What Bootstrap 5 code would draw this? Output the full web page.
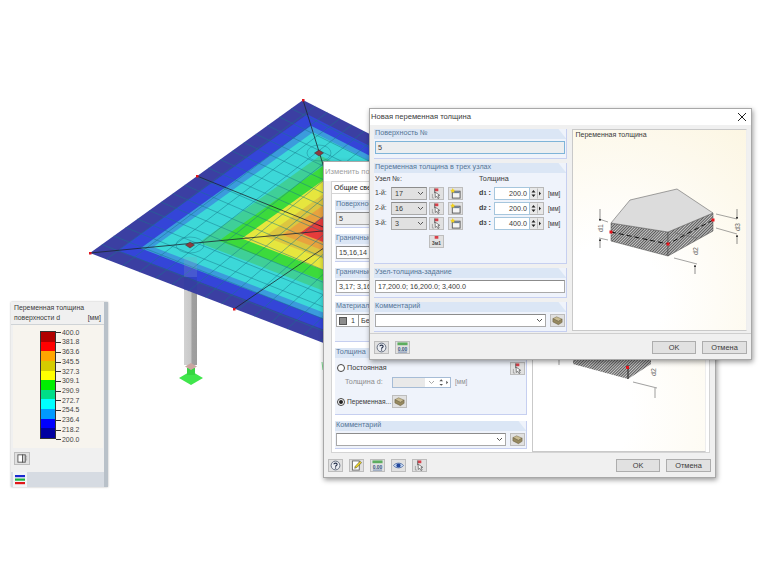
<!DOCTYPE html>
<html lang="ru">
<head>
<meta charset="utf-8">
<title>Новая переменная толщина</title>
<link href="https://cdn.jsdelivr.net/npm/bootstrap@5.3.0/dist/css/bootstrap.min.css" rel="stylesheet">
<style>
html,body{margin:0;background:#fff;overflow:hidden}
.desk{position:relative;width:760px;height:570px;font-family:"Liberation Sans",Arial,sans-serif;font-size:7.2px;line-height:1.2;color:#3a3a3a}
.scene{position:absolute;left:0;top:0}
.win{position:absolute;background:#f0f0f0;border:1px solid #a8a8a8;box-shadow:1px 2px 5px rgba(0,0,0,.4)}
.win-front{left:369px;top:108px;width:383px;height:252px}
.win-back{left:323px;top:161px;width:393px;height:317px}
.win-legend{position:absolute;left:11px;top:302px;width:97px;height:185px;background:#f0f0f0;border-right:4px solid #b9c1c9;box-shadow:0 0 2px rgba(0,0,0,.3)}
.ttl{height:16px;background:#fff;padding-left:1px;font-size:7.6px}
.ttl-dim{color:#a0a0a0;height:19px}
.closex{width:12px;height:12px;margin-right:3px}
.main-f{height:208px;padding:4px 4px 0 4px;gap:5px}
.col-f{width:194px}
.col-b{width:193px}
.grp{background:#eff3fb;border-right:1px solid #c6cff0;border-bottom:1px solid #c6cff0}
.grp-h{height:10px;background:#dbe6f5;color:#557596;padding-left:1px;clip-path:polygon(0 0,calc(100% - 8px) 0,100% 100%,0 100%)}
.grp-b{padding:2px 1px 0 1px}
.h28{height:28px}.h30{height:30px}.h40{height:40px}.h67{height:67px}.h101{height:101px}
.fld{height:13px;background:#fff;border:1px solid #a9a9a9;border-top-color:#8c8c8c;padding:0 2px;line-height:11px;border-radius:0;color:#3a3a3a}
.fld-focus{background:#eceef0;border-color:#7fb4d8}
.fld-gray{background:#ececec}
.sel{width:36px;background:#e1e1e1;padding-left:3px}
.chev{width:7px;height:5px;margin-left:auto;flex:none}
.tb{width:15px;height:13px;padding:0;background:#e1e1e1;border:1px solid #bdbdbd;border-radius:0;flex:none;line-height:0}
.tb:hover{background:#e1e1e1}
.tb svg{width:11px;height:11px}
.ok{height:13px;padding:0;background:#e1e1e1;border:1px solid #adadad;border-radius:0;font-size:7.4px;line-height:11px;color:#3a3a3a}
.w44{width:44px}.w45{width:45px}
.row-s{height:13px;margin-bottom:2px}
.lab1{width:16px;font-size:6.8px}
.lab2{width:15px;font-weight:700}
.lab2 em{font-style:normal;font-size:5.6px}
.sp-l{margin-left:2px}.sp-m{margin-left:4px}.sp-r{margin-left:16px}
.num{width:36px;text-align:right;background:#fff;border-color:#a6c6dd}
.spin{width:14px;height:13px;background:#e8e8e8;border:1px solid #b8b8b8;border-left:0;flex:none}
.spin svg{display:block;width:12px;height:11px}
.unit{margin-left:4px;font-size:6.4px}
.hdr-l{width:104px;height:12px;padding-left:0}
.hdr-r{height:12px}
.pick3{margin:3px 0 0 54px}
.foot{border-top:1px solid #cfcfcf;padding:7px 4px 0 4px}
.gp6{gap:6px}
.prev{background:radial-gradient(circle at 20% 85%,#fff 25%,#fcf6e3 100%);border:1px solid #c9c9c9;border-right-color:#eee;position:relative;font-size:7px;padding:1px 2px}
.prev-f{width:175px;height:202px}
.prev-b{width:174px;height:252px}
.prev svg{position:absolute;left:0;top:0}
.prev text{font-family:"Liberation Sans",Arial,sans-serif;font-size:7px;fill:#666}
.tab-w{height:12px;width:68px;margin-left:7px;background:#fff;padding:2px 0 0 2px;border:1px solid #d4d4d4;border-bottom:0;color:#222}
.pane{margin:0 5px 0 7px;height:260px;background:#fff;border:1px solid #d4d4d4;padding:6px 3px 0 3px;gap:5px}
.foot-b{padding:6px 4px 0 4px}
.swatch{width:8px;height:8px;background:#8c8c8c;border:1px solid #555;margin-right:4px;flex:none}
.vbar{border-left:1px solid #999;margin:0 3px;padding-left:2px}
.rb{width:8px;height:8px;border-radius:50%;border:1px solid #444;background:#fff;margin-right:2px;flex:none;position:relative}
.rb-on::after{content:"";position:absolute;left:1px;top:1px;width:4px;height:4px;border-radius:50%;background:#222}
.t-row1{height:14px;margin-top:3px;padding-left:1px}
.t-row2{height:12px;margin-top:1px;color:#8d8d8d}
.t-ind{margin-left:9px;width:47px;flex:none}
.t-inp{width:59px;height:11px;background:#fff;border:1px solid #a6bcd6;flex:none;padding-right:1px}
.t-gray{width:32px;height:9px;background:#e9e9e9;flex:none}
.t-inp .chev{margin:0 3px 0 3px}
.t-row3{height:13px;margin-top:7px;padding-left:1px}
.t-lab{width:45px;flex:none;white-space:nowrap;font-size:6.6px}
.lg-h{padding:1px 3px 0 3px;height:23px;border-bottom:1px solid #cfd3d6;line-height:10px;font-size:6.9px}
.lg-b{background:#f7f4ee;height:123px;margin:0 0 0 2px;width:90px;position:relative;padding:6px 0 0 27px}
.lg-bar{width:16px;height:108px;border:1px solid #333;flex:none}
.lg-bar i{display:block;flex:1 1 0}
.lg-sc{height:117px;margin-top:-3px;font-size:6.9px}
.lg-sc span{display:flex;align-items:center;height:9.73px;color:#444}
.lg-sc span::before{content:"";width:5px;border-top:1px solid #333;margin-right:1px}
.lg-btnrow{height:23px;padding:4px 0 0 3px}
.lg-btn{width:16px;height:13px}
.lg-foot{height:15px;background:#d6dbe2;padding-left:2px}
.lg-tab{width:14px;height:15px;background:#f2f4f6;padding:2px}
.lg-tab svg{display:block;width:10px;height:11px}
</style>
</head>
<body>
<svg width="0" height="0" class="position-absolute">
<defs>
<symbol id="i-help" viewBox="0 0 12 12"><circle cx="6" cy="6" r="4.8" fill="#eef0f4" stroke="#5a6577" stroke-width="1"/><path d="M4.200 4.600C4.400 3 7.800 3 7.800 4.800 7.800 6 6 6 6 7.300" fill="none" stroke="#24304a" stroke-width="1.200"/><rect x="5.400" y="8.100" width="1.300" height="1.300" fill="#24304a"/></symbol>
<symbol id="i-pick" viewBox="0 0 12 12"><path d="M4 .5h4v3H4z" fill="#d8404a"/><path d="M4 .5v5" stroke="#666"/><path d="M4.500 4.500l5 3.500-2 .4 1.400 2.500-1.300.6-1.400-2.500-1.500 1.300z" fill="#fff" stroke="#444" stroke-width=".7"/><path d="M1.500 6.500v4.500h2" fill="none" stroke="#888" stroke-width=".7"/></symbol>
<symbol id="i-new" viewBox="0 0 12 12"><rect x="2.500" y="3.500" width="8.500" height="7.500" fill="#f4f4f4" stroke="#555"/><rect x="3" y="4" width="7.500" height="1.600" fill="#6a7f98"/><path d="M3 0l.9 1.800L6 2.200 4.300 3.400 4.800 5.400 3 4.300 1.200 5.400 1.700 3.400 0 2.200 2.100 1.800z" fill="#f2d21c"/></symbol>
<symbol id="i-book" viewBox="0 0 12 12"><path d="M1 4l4-2 6 2.500-4 2.500z" fill="#c9bc92" stroke="#7d7250" stroke-width=".6"/><path d="M1 4v3.500L7 10.500l4-2.500V4.500L7 7z" fill="#96895f" stroke="#6c6243" stroke-width=".6"/></symbol>
<symbol id="i-num" viewBox="0 0 12 12"><rect x="0.500" y="0.500" width="11" height="3" fill="#5cad5e"/><text x="6" y="9.500" text-anchor="middle" font-size="5.400" font-family="Liberation Sans,sans-serif" font-weight="700" fill="#34567e">0.00</text><path d="M1 11h10" stroke="#4a6a9a" stroke-width=".8"/></symbol>
<symbol id="i-edit" viewBox="0 0 12 12"><rect x="1.500" y="1" width="7.500" height="10" fill="#fff" stroke="#666"/><path d="M4 9l.6-2.200L10 1.400l1.500 1.500L6.200 8.400z" fill="#efd520" stroke="#444" stroke-width=".6"/></symbol>
<symbol id="i-eye" viewBox="0 0 12 12"><path d="M.5 6C3 2.600 9 2.600 11.500 6 9 9.400 3 9.400.5 6z" fill="#c6d8ee" stroke="#3a5a9c" stroke-width=".8"/><circle cx="6" cy="6" r="2.300" fill="#23479c"/></symbol>
<symbol id="i-tile" viewBox="0 0 12 12"><rect x="1" y="2" width="5" height="8" fill="#fff" stroke="#555"/><rect x="6" y="2" width="3" height="8" fill="#d6d6d6" stroke="#555"/><path d="M10.500 3v6" stroke="#888" stroke-dasharray="1 1"/></symbol>
<symbol id="i-3m1" viewBox="0 0 12 12"><path d="M4 0h4v3H4z" fill="#d8404a"/><text x="6" y="10" text-anchor="middle" font-size="5.200" font-family="Liberation Sans,sans-serif" font-weight="700" fill="#444">3м1</text></symbol>
<pattern id="hatch" width="2" height="2" patternUnits="userSpaceOnUse" patternTransform="rotate(45)"><rect width="2" height="2" fill="#c8c8c8"/><rect width="1" height="2" fill="#5a5a5a"/></pattern>
<marker id="ar" viewBox="0 0 6 6" refX="5" refY="3" markerWidth="4" markerHeight="4" orient="auto"><path d="M0 0l6 3-6 3z" fill="#333"/></marker>
</defs>
</svg>

<div class="desk">
  <svg id="scene" class="scene" width="760" height="570" viewBox="0 0 760 570">
    <defs><linearGradient id="col" x1="0" x2="1" y1="0" y2="0"><stop offset="0" stop-color="#d2d2d2"/><stop offset=".55" stop-color="#c8c8c8"/><stop offset=".6" stop-color="#a0a0a0"/><stop offset="1" stop-color="#9c9c9c"/></linearGradient></defs>
    <rect x="184" y="257" width="13" height="108" fill="url(#col)"/>
    <rect x="187" y="368" width="8" height="9" fill="#35d640"/>
    <path d="M191 371l12 7-12 7-12-7z" fill="#40e64c"/>
    <rect x="187" y="369" width="8" height="6" fill="#35d640"/>
    <path d="M191 363l6 3.500-6 3.500-6-3.500z" fill="#c9a6a0"/>
    <g id="plate"></g>
    <rect x="184" y="257" width="13" height="20" fill="#8fa4b8" opacity=".22"/>
    <rect x="184" y="277" width="13" height="13" fill="#2a3aa0" opacity=".3"/>
    <g stroke="#1c2630" stroke-width=".8" fill="none">
      <path d="M303 100L343 229"/><path d="M90 253L343 229"/><path d="M197 176L343 235"/><path d="M234 309L343 235"/>
    </g>
    <g fill="#e0161e"><rect x="302" y="99" width="2.500" height="2.500"/><rect x="89" y="252" width="2.500" height="2.500"/><rect x="196" y="175" width="2.500" height="2.500"/><rect x="233" y="308" width="2.500" height="2.500"/></g>
    <path d="M190 242l4.500 3-4.500 3-4.500-3z" fill="#8e3a3e" stroke="#333" stroke-width=".5"/>
    <path d="M319 150l4.500 3-4.500 3-4.500-3z" fill="#8e3a3e" stroke="#333" stroke-width=".5"/>
    <path d="M322 362l1 8" stroke="#5ad070" stroke-width=".8"/>
  </svg>

  <aside class="win-legend d-flex flex-column">
    <div class="lg-h d-flex flex-column">
      <div>Переменная толщина</div>
      <div class="d-flex justify-content-between"><span>поверхности d</span><span>[мм]</span></div>
    </div>
    <div class="lg-b d-flex">
      <div class="lg-bar d-flex flex-column">
        <i style="background:#b00000"></i><i style="background:#ff0000"></i><i style="background:#ffa500"></i><i style="background:#d4cc00"></i><i style="background:#ffff00"></i><i style="background:#00ee00"></i><i style="background:#00dd88"></i><i style="background:#00ffff"></i><i style="background:#0099ff"></i><i style="background:#0000ff"></i><i style="background:#0000a0"></i>
      </div>
      <div class="lg-sc d-flex flex-column">
        <span>400.0</span><span>381.8</span><span>363.6</span><span>345.5</span><span>327.3</span><span>309.1</span><span>290.9</span><span>272.7</span><span>254.5</span><span>236.4</span><span>218.2</span><span>200.0</span>
      </div>
    </div>
    <div class="lg-btnrow"><button class="btn tb lg-btn" type="button"><svg><use href="#i-tile"/></svg></button></div>
    <div class="lg-foot mt-auto"><div class="lg-tab"><svg viewBox="0 0 10 11"><rect y="1" width="10" height="2.200" fill="#1a2ad0"/><rect y="4.500" width="10" height="2.200" fill="#18b040"/><rect y="8" width="10" height="2.200" fill="#e01818"/></svg></div></div>
  </aside>

  <section class="win win-back d-flex flex-column">
    <div class="ttl ttl-dim d-flex align-items-center">Изменить по</div>
    <div class="tab-w">Общие свед</div>
    <div class="pane d-flex">
      <div class="col-b d-flex flex-column gp6">
        <div class="grp h28"><div class="grp-h">Поверхнос</div><div class="grp-b"><div class="fld fld-gray">5</div></div></div>
        <div class="grp h28"><div class="grp-h">Граничные</div><div class="grp-b"><div class="fld">15,16,14</div></div></div>
        <div class="grp h28"><div class="grp-h">Граничные</div><div class="grp-b"><div class="fld">3,17; 3,16;</div></div></div>
        <div class="grp h40"><div class="grp-h">Материал</div><div class="grp-b"><div class="fld d-flex align-items-center"><span class="swatch"></span>1<span class="vbar">Бе</span></div></div></div>
        <div class="grp h67"><div class="grp-h">Толщина</div>
          <div class="grp-b pt-0">
            <div class="t-row1 d-flex align-items-center"><span class="rb"></span>Постоянная<button class="btn tb ms-auto" type="button"><svg><use href="#i-pick"/></svg></button></div>
            <div class="t-row2 d-flex align-items-center"><span class="t-ind">Толщина d:</span><span class="t-inp d-flex align-items-center"><span class="t-gray"></span><svg class="chev" viewBox="0 0 7 5"><path d="M1 1l2.500 2.500L6 1" fill="none" stroke="#aaa"/></svg><svg width="12" height="9" viewBox="0 0 12 9"><path d="M3.500 1l2 2h-4zM3.500 8l-2-2h4zM9 2.500l2 2-2 2z" fill="#555"/></svg></span><span class="unit">[мм]</span></div>
            <div class="t-row3 d-flex align-items-center"><span class="rb rb-on"></span><span class="t-lab">Переменная...</span><button class="btn tb" type="button"><svg><use href="#i-book"/></svg></button></div>
          </div>
        </div>
        <div class="grp h28"><div class="grp-h">Комментарий</div><div class="grp-b d-flex gap-1"><div class="fld flex-grow-1 d-flex align-items-center"><svg class="chev" viewBox="0 0 7 5"><path d="M1 1l2.500 2.500L6 1" fill="none" stroke="#555"/></svg></div><button class="btn tb" type="button"><svg><use href="#i-book"/></svg></button></div></div>
      </div>
      <div class="prev prev-b">
        <svg width="174" height="252" viewBox="0 0 174 252">
          <path d="M40 163L95 178 118 163V150H40z" fill="url(#hatch)"/>
          <path d="M95 178V164" stroke="#222"/>
          <rect x="93" y="165" width="3" height="3" fill="#e0161e"/>
          <path d="M100 181l24 6M122 187v10M26 150v14" stroke="#777" stroke-width=".7" fill="none"/>
          <text transform="translate(123 175) rotate(-90)">d2</text>
        </svg>
      </div>
    </div>
    <div class="foot-b d-flex gp6">
      <button class="btn tb" type="button"><svg><use href="#i-help"/></svg></button>
      <button class="btn tb" type="button"><svg><use href="#i-edit"/></svg></button>
      <button class="btn tb" type="button"><svg><use href="#i-num"/></svg></button>
      <button class="btn tb" type="button"><svg><use href="#i-eye"/></svg></button>
      <button class="btn tb" type="button"><svg><use href="#i-pick"/></svg></button>
      <button class="btn ok w44 ms-auto" type="button">OK</button>
      <button class="btn ok w45" type="button">Отмена</button>
    </div>
  </section>

  <section class="win win-front d-flex flex-column">
    <div class="ttl d-flex align-items-center justify-content-between">
      <span>Новая переменная толщина</span>
      <svg class="closex" viewBox="0 0 12 12"><path d="M2 2l8 8M10 2l-8 8" stroke="#222" stroke-width="1"/></svg>
    </div>
    <div class="main-f d-flex">
      <div class="col-f d-flex flex-column gap-1">
        <div class="grp h30"><div class="grp-h">Поверхность №</div><div class="grp-b"><div class="fld fld-focus">5</div></div></div>
        <div class="grp h101"><div class="grp-h">Переменная толщина в трех узлах</div>
          <div class="grp-b">
            <div class="d-flex"><div class="hdr-l">Узел №:</div><div class="hdr-r">Толщина</div></div>
            <div class="row-s d-flex align-items-center">
              <span class="lab1">1-й:</span><div class="fld sel d-flex align-items-center">17<svg class="chev" viewBox="0 0 7 5"><path d="M1 1l2.500 2.500L6 1" fill="none" stroke="#555"/></svg></div>
              <button class="btn tb sp-l" type="button"><svg><use href="#i-pick"/></svg></button><button class="btn tb sp-m" type="button"><svg><use href="#i-new"/></svg></button>
              <span class="lab2 sp-r">d<em>1</em> :</span><div class="fld num">200.0</div><div class="spin"><svg viewBox="0 0 12 11"><path d="M3.500 2l2 2.500h-4zM3.500 9l-2-2.500h4z" fill="#222"/><path d="M7.500.5v10" stroke="#bbb"/><path d="M9 3.500l2 2-2 2z" fill="#222"/></svg></div><span class="unit">[мм]</span>
            </div>
            <div class="row-s d-flex align-items-center">
              <span class="lab1">2-й:</span><div class="fld sel d-flex align-items-center">16<svg class="chev" viewBox="0 0 7 5"><path d="M1 1l2.500 2.500L6 1" fill="none" stroke="#555"/></svg></div>
              <button class="btn tb sp-l" type="button"><svg><use href="#i-pick"/></svg></button><button class="btn tb sp-m" type="button"><svg><use href="#i-new"/></svg></button>
              <span class="lab2 sp-r">d<em>2</em> :</span><div class="fld num">200.0</div><div class="spin"><svg viewBox="0 0 12 11"><path d="M3.500 2l2 2.500h-4zM3.500 9l-2-2.500h4z" fill="#222"/><path d="M7.500.5v10" stroke="#bbb"/><path d="M9 3.500l2 2-2 2z" fill="#222"/></svg></div><span class="unit">[мм]</span>
            </div>
            <div class="row-s d-flex align-items-center">
              <span class="lab1">3-й:</span><div class="fld sel d-flex align-items-center">3<svg class="chev" viewBox="0 0 7 5"><path d="M1 1l2.500 2.500L6 1" fill="none" stroke="#555"/></svg></div>
              <button class="btn tb sp-l" type="button"><svg><use href="#i-pick"/></svg></button><button class="btn tb sp-m" type="button"><svg><use href="#i-new"/></svg></button>
              <span class="lab2 sp-r">d<em>3</em> :</span><div class="fld num">400.0</div><div class="spin"><svg viewBox="0 0 12 11"><path d="M3.500 2l2 2.500h-4zM3.500 9l-2-2.500h4z" fill="#222"/><path d="M7.500.5v10" stroke="#bbb"/><path d="M9 3.500l2 2-2 2z" fill="#222"/></svg></div><span class="unit">[мм]</span>
            </div>
            <button class="btn tb pick3" type="button"><svg><use href="#i-3m1"/></svg></button>
          </div>
        </div>
        <div class="grp h30"><div class="grp-h">Узел-толщина-задание</div><div class="grp-b"><div class="fld">17,200.0; 16,200.0; 3,400.0</div></div></div>
        <div class="grp h30"><div class="grp-h">Комментарий</div><div class="grp-b d-flex gap-1"><div class="fld flex-grow-1 d-flex align-items-center"><svg class="chev" viewBox="0 0 7 5"><path d="M1 1l2.500 2.500L6 1" fill="none" stroke="#555"/></svg></div><button class="btn tb" type="button"><svg><use href="#i-book"/></svg></button></div></div>
      </div>
      <div class="prev prev-f">Переменная толщина
        <svg width="175" height="202" viewBox="573 129 175 202">
          <path d="M611 222L668 231V255L611 240z" fill="url(#hatch)" stroke="#444" stroke-width=".5"/>
          <path d="M668 231L713 212V230L668 255z" fill="url(#hatch)" stroke="#444" stroke-width=".5"/>
          <path d="M611 222L630 199 677 188 713 212 668 231z" fill="#dcdcdc" stroke="#666" stroke-width=".6"/>
          <path d="M611 231L668 243 713 219" fill="none" stroke="#111" stroke-width="1" stroke-dasharray="5 3"/>
          <g fill="#e8141c"><rect x="609.500" y="229.500" width="3" height="3"/><rect x="666.500" y="241.500" width="3" height="3"/><rect x="711.500" y="217.500" width="3" height="3"/></g>
          <g stroke="#666" stroke-width=".6" fill="none">
            <path d="M599 218l9 3M599 237l9 2M716 213l21 5M716 227l21 6M674 257l23 6M675 232l22 5"/>
          </g>
          <g stroke="#444" stroke-width=".6" fill="none" marker-end="url(#ar)">
            <path d="M600 208V220"/><path d="M600 247V238"/><path d="M737 208V218"/><path d="M737 243V234"/><path d="M695 273V264"/>
          </g>
          <text transform="translate(603 231) rotate(-90)">d1</text>
          <text transform="translate(740 230) rotate(-90)">d3</text>
          <text transform="translate(698 254) rotate(-90)">d2</text>
        </svg>
      </div>
    </div>
    <div class="foot d-flex gp6">
      <button class="btn tb" type="button"><svg><use href="#i-help"/></svg></button>
      <button class="btn tb" type="button"><svg><use href="#i-num"/></svg></button>
      <button class="btn ok w44 ms-auto" type="button">OK</button>
      <button class="btn ok w45" type="button">Отмена</button>
    </div>
  </section>
</div>

<script>
// Plate of the 3D model: concentric colour bands with a finite-element mesh over them.
(function(){
  var C=[343,229],A=[303,100],L=[90,253],B=[386,367],R=[523,212],g=document.getElementById('plate'),out='';
  var bands=[[1,'#3b3fa2'],[.89,'#3445d8'],[.8,'#3b9bdc'],[.75,'#3cd8d8'],[.57,'#3fcf98'],[.49,'#3cda3c'],[.4,'#e6e63e'],[.31,'#dcc640'],[.24,'#e8a23e'],[.17,'#e63c3c']];
  function sc(p,k){return (C[0]+(p[0]-C[0])*k).toFixed(1)+','+(C[1]+(p[1]-C[1])*k).toFixed(1);}
  bands.forEach(function(b){out+='<polygon fill="'+b[1]+'" points="'+[A,R,B,L].map(function(p){return sc(p,b[0]);}).join(' ')+'"/>';});
  function lerp(p,q,t){return [p[0]+(q[0]-p[0])*t,p[1]+(q[1]-p[1])*t];}
  var n=18,d='';
  for(var i=1;i<n;i++){var t=i/n,a=lerp(L,A,t),b=lerp(B,R,t),c=lerp(L,B,t),e=lerp(A,R,t);
    d+='M'+a[0].toFixed(1)+' '+a[1].toFixed(1)+'L'+b[0].toFixed(1)+' '+b[1].toFixed(1);
    d+='M'+c[0].toFixed(1)+' '+c[1].toFixed(1)+'L'+e[0].toFixed(1)+' '+e[1].toFixed(1);}
  out+='<path d="'+d+'" fill="none" stroke="#17788a" stroke-width=".7" opacity=".7"/>';
  out+='<ellipse cx="190" cy="245" rx="14" ry="8" fill="none" stroke="#17788a" stroke-width=".6" opacity=".7"/><ellipse cx="319" cy="153" rx="12" ry="8" fill="none" stroke="#17788a" stroke-width=".6" opacity=".7"/>';
  g.innerHTML=out;
})();
</script>
<script src="https://cdn.jsdelivr.net/npm/bootstrap@5.3.0/dist/js/bootstrap.bundle.min.js"></script>
</body>
</html>
